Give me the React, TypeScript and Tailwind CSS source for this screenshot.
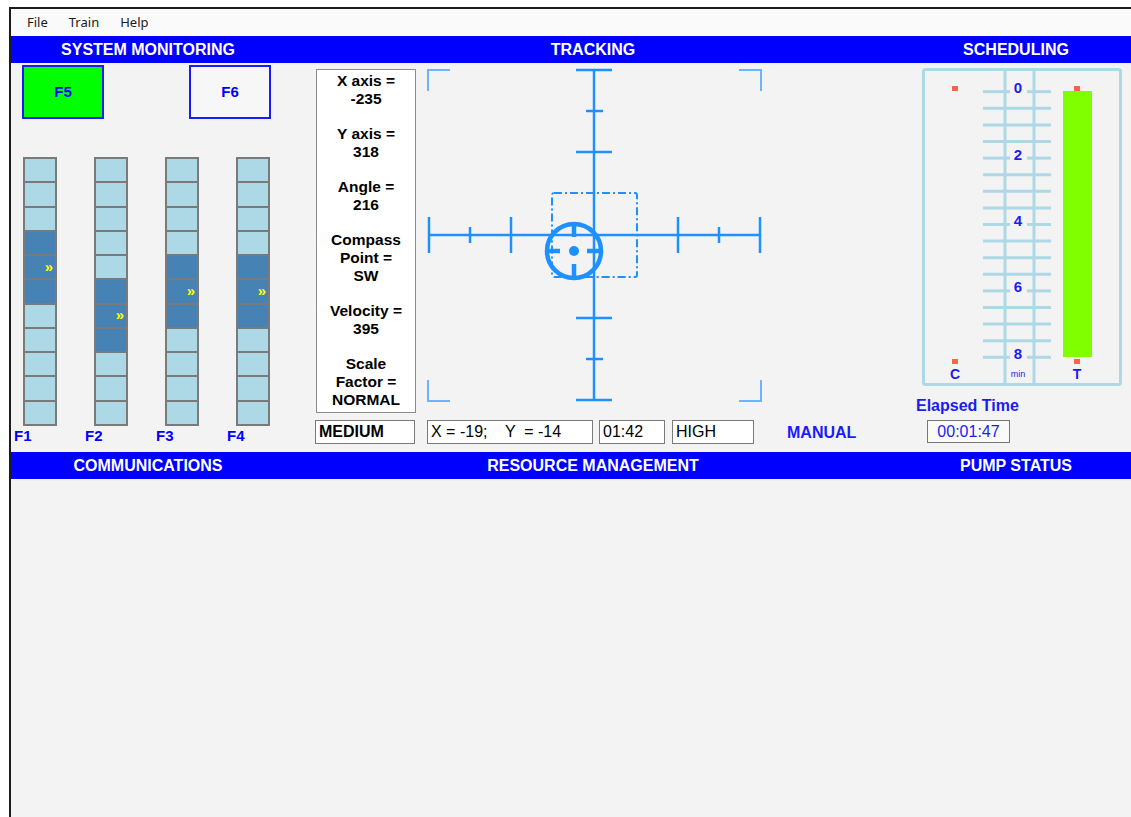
import React from "react";

const HEADER = "h-[27px] bg-[#0000ff] text-white font-bold text-[16px] flex items-center justify-center";

// dark (occupied) segment rows and the row carrying the marker, per feeder
const FEEDERS = [
  { label: "F1", dark: [3, 4, 5], mark: 4 },
  { label: "F2", dark: [5, 6, 7], mark: 6 },
  { label: "F3", dark: [4, 5, 6], mark: 5 },
  { label: "F4", dark: [4, 5, 6], mark: 5 },
];

function FeederBar({ label, dark, mark }: { label: string; dark: number[]; mark: number }) {
  return (
    <div className="flex flex-col">
      <div className="w-[34px] h-[269px] bg-[#7a7a7a] p-[2px] grid grid-rows-11 gap-[2px]">
        {Array.from({ length: 11 }).map((_, i) => (
          <div
            key={i}
            className={
              "flex items-center justify-end pr-[2px] " +
              (dark.includes(i) ? "bg-[#4682b4]" : "bg-[#add8e6]")
            }
          >
            {i === mark && (
              <span className="text-[#ffff00] text-[15px] font-bold leading-none -mt-[2px]">»</span>
            )}
          </div>
        ))}
      </div>
      <div className="-ml-[9px] mt-[1px] text-[15px] font-bold text-[#0000ff] leading-[17px]">{label}</div>
    </div>
  );
}

function InfoBox() {
  const groups = [
    ["X axis =", "-235"],
    ["Y axis =", "318"],
    ["Angle =", "216"],
    ["Compass", "Point =", "SW"],
    ["Velocity =", "395"],
    ["Scale", "Factor =", "NORMAL"],
  ];
  return (
    <div className="w-[100px] h-[344px] mt-[6px] border border-[#8c8c8c] bg-white pt-[2px] flex flex-col gap-[17.7px] text-center text-black font-bold text-[15.5px] leading-[17.7px]">
      {groups.map((g, i) => (
        <div key={i}>
          {g.map((line) => (
            <div key={line}>{line}</div>
          ))}
        </div>
      ))}
    </div>
  );
}

function Crosshair() {
  const c = "#1e90ff";
  const corner = "#6cb4ff";
  return (
    <svg width="340" height="340" viewBox="0 0 340 340" className="ml-[8px] mt-[3px]">
      {/* viewfinder corners */}
      <g stroke={corner} strokeWidth="2" fill="none">
        <path d="M4 25 V4 H26" />
        <path d="M315 4 H337 V25" />
        <path d="M4 314 V335 H26" />
        <path d="M315 335 H337 V314" />
      </g>
      <g stroke={c} strokeWidth="2.5" fill="none">
        {/* axes */}
        <line x1="170" y1="4" x2="170" y2="335" />
        <line x1="5" y1="169" x2="336" y2="169" />
        {/* vertical axis ticks */}
        <line x1="152" y1="4" x2="188" y2="4" />
        <line x1="162" y1="45" x2="179" y2="45" />
        <line x1="152" y1="86" x2="188" y2="86" />
        <line x1="152" y1="252" x2="188" y2="252" />
        <line x1="162" y1="293" x2="179" y2="293" />
        <line x1="152" y1="334" x2="188" y2="334" />
        {/* horizontal axis ticks */}
        <line x1="5" y1="151" x2="5" y2="187" />
        <line x1="46" y1="161" x2="46" y2="177" />
        <line x1="87" y1="151" x2="87" y2="187" />
        <line x1="254" y1="151" x2="254" y2="187" />
        <line x1="295" y1="161" x2="295" y2="177" />
        <line x1="336" y1="151" x2="336" y2="187" />
      </g>
      {/* target window */}
      <rect
        x="128"
        y="127"
        width="85"
        height="84"
        rx="2"
        fill="none"
        stroke={c}
        strokeWidth="2"
        strokeDasharray="8 3 2 3"
      />
      {/* reticle */}
      <g stroke={c} strokeWidth="4.5" fill="none">
        <circle cx="150" cy="185" r="27" />
        <line x1="150" y1="157" x2="150" y2="171" />
        <line x1="150" y1="198" x2="150" y2="212" />
        <line x1="122" y1="185" x2="136" y2="185" />
        <line x1="163" y1="185" x2="178" y2="185" />
      </g>
      <circle cx="150" cy="185" r="5" fill={c} />
    </svg>
  );
}

function ScheduleGauge() {
  const line = "#add8e6";
  const ticks = Array.from({ length: 17 }).map((_, i) => 25.7 + i * 16.6);
  return (
    <svg width="205" height="323" viewBox="0 0 205 323" className="ml-[19px] mt-[3px]">
      <rect x="3.5" y="3.5" width="197" height="315" rx="2" fill="none" stroke={line} strokeWidth="3" />
      <line x1="85" y1="3.5" x2="85" y2="318.5" stroke={line} strokeWidth="3" />
      <line x1="114" y1="3.5" x2="114" y2="318.5" stroke={line} strokeWidth="3" />
      {ticks.map((y, i) =>
        i % 4 === 0 ? (
          <g key={i}>
            <line x1="63" y1={y} x2="90" y2={y} stroke={line} strokeWidth="3" />
            <line x1="107" y1={y} x2="131" y2={y} stroke={line} strokeWidth="3" />
            <text
              x="98"
              y={y + 1.5}
              textAnchor="middle"
              fontFamily="'Liberation Sans', Arial, sans-serif"
              fontWeight="bold"
              fontSize="15"
              fill="#1c1cf0"
            >
              {i / 2}
            </text>
          </g>
        ) : (
          <line key={i} x1="63" y1={y} x2="131" y2={y} stroke={line} strokeWidth="3" />
        )
      )}
      {/* elapsed bar */}
      <rect x="143" y="25" width="29" height="266" fill="#7fff00" />
      {/* current / target markers */}
      <g fill="#ff6347">
        <rect x="32" y="20" width="6" height="5" />
        <rect x="32" y="293" width="6" height="5" />
        <rect x="154" y="20" width="6" height="5" />
        <rect x="154" y="293" width="6" height="5" />
      </g>
      <g fontFamily="'Liberation Sans', Arial, sans-serif" fill="#1c1cf0" textAnchor="middle">
        <text x="35" y="313" fontSize="14" fontWeight="bold">C</text>
        <text x="98" y="311" fontSize="9">min</text>
        <text x="157" y="313" fontSize="14" fontWeight="bold">T</text>
      </g>
    </svg>
  );
}

function Field({ w, children, bold }: { w: string; children: React.ReactNode; bold?: boolean }) {
  return (
    <div
      className={
        "h-[24px] border border-[#7a7a7a] bg-white pl-[3px] pt-[1px] flex items-center text-[16px] text-black whitespace-pre leading-none " +
        w +
        (bold ? " font-bold" : "")
      }
    >
      {children}
    </div>
  );
}

export default function App() {
  return (
    <div className="w-full min-h-[817px] bg-white pt-[7px] pl-[9px] font-['Liberation_Sans',Arial,sans-serif]">
      <div className="min-h-[810px] border-t-2 border-l-2 border-[#1c1c1c] bg-[#f3f3f3] flex flex-col">
        {/* menu bar */}
        <div className="h-[27px] bg-[#fafafa] flex items-center pl-[16px] gap-[21px] text-[13px] text-[#1a1a1a] font-['Noto_Sans',sans-serif]">
          <span>File</span>
          <span>Train</span>
          <span>Help</span>
        </div>

        <div className="grid grid-cols-[274px_616px_1fr]">
          <div className={HEADER}>SYSTEM MONITORING</div>
          <div className={HEADER}>TRACKING</div>
          <div className={HEADER}>SCHEDULING</div>
        </div>

        <div className="grid grid-cols-[274px_616px_1fr] h-[389px]">
          {/* system monitoring */}
          <div className="flex flex-col pt-[2px]">
            <div className="flex pl-[11px] gap-[85px]">
              <div className="w-[82px] h-[54px] border-2 border-[#1a1aff] bg-[#00ff00] flex items-center justify-center text-[15px] font-bold text-[#0000ff]">
                F5
              </div>
              <div className="w-[82px] h-[54px] border-2 border-[#1a1aff] bg-[#f7f7f7] flex items-center justify-center text-[15px] font-bold text-[#0000ff]">
                F6
              </div>
            </div>
            <div className="flex pl-[12px] gap-[37px] mt-[38px]">
              {FEEDERS.map((f) => (
                <FeederBar key={f.label} {...f} />
              ))}
            </div>
          </div>

          {/* tracking */}
          <div className="flex flex-col">
            <div className="flex items-start pl-[31px]">
              <InfoBox />
              <Crosshair />
            </div>
            <div className="flex items-center pl-[30px] mt-[5px]">
              <Field w="w-[100px]" bold>MEDIUM</Field>
              <div className="ml-[12px]">
                <Field w="w-[166px]">{"X = -19;    Y  = -14"}</Field>
              </div>
              <div className="ml-[6px]">
                <Field w="w-[66px]">01:42</Field>
              </div>
              <div className="ml-[7px]">
                <Field w="w-[82px]">HIGH</Field>
              </div>
              <span className="ml-[33px] mt-[3px] text-[16px] font-bold text-[#1a1aff]">MANUAL</span>
            </div>
          </div>

          {/* scheduling */}
          <div className="flex flex-col">
            <ScheduleGauge />
            <div className="pl-[15px] mt-[8px] text-[16px] leading-[18px] font-bold text-[#1c1cf0]">Elapsed Time</div>
            <div className="ml-[26px] mt-[5px] w-[83px] h-[23px] border border-[#777] bg-[#fafafa] flex items-center justify-center text-[16px] text-[#1c1cf0]">
              00:01:47
            </div>
          </div>
        </div>

        <div className="grid grid-cols-[274px_616px_1fr]">
          <div className={HEADER}>COMMUNICATIONS</div>
          <div className={HEADER}>RESOURCE MANAGEMENT</div>
          <div className={HEADER}>PUMP STATUS</div>
        </div>

        <div className="flex-1" />
      </div>
    </div>
  );
}
